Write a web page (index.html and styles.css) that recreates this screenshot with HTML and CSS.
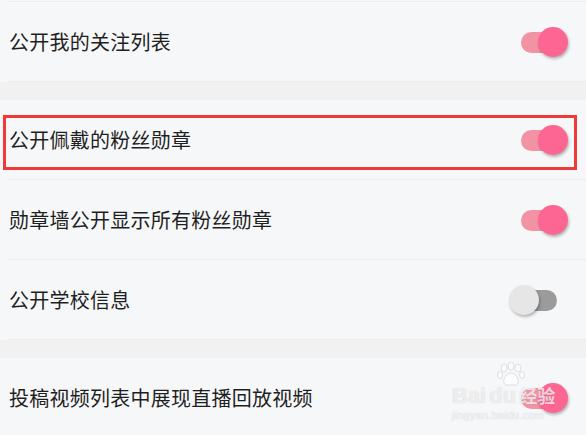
FILE: index.html
```html
<!DOCTYPE html>
<html lang="zh">
<head>
<meta charset="utf-8">
<link rel="stylesheet" href="styles.css">
</head>
<body>
<div class="page">
  <div class="topline"></div>
  <div class="group">
    <div class="row">
      <span class="label">公开我的关注列表</span>
      <span class="toggle on"><span class="track"></span><span class="thumb"></span></span>
    </div>
  </div>
  <div class="gap"></div>
  <div class="group">
    <div class="row">
      <span class="label">公开佩戴的粉丝勋章</span>
      <span class="toggle on"><span class="track"></span><span class="thumb"></span></span>
    </div>
    <div class="row">
      <span class="label">勋章墙公开显示所有粉丝勋章</span>
      <span class="toggle on"><span class="track"></span><span class="thumb"></span></span>
    </div>
    <div class="row">
      <span class="label">公开学校信息</span>
      <span class="toggle off"><span class="track"></span><span class="thumb"></span></span>
    </div>
  </div>
  <div class="gap"></div>
  <div class="group">
    <div class="row">
      <span class="label">投稿视频列表中展现直播回放视频</span>
      <span class="toggle on"><span class="track"></span><span class="thumb"></span></span>
    </div>
  </div>
  <div class="highlight"></div>
  <div class="watermark">
    <svg class="wm-paw" width="30" height="26" viewBox="0 0 30 26">
      <ellipse cx="8" cy="6" rx="3" ry="4" />
      <ellipse cx="15" cy="4" rx="3" ry="4" />
      <ellipse cx="22" cy="6" rx="3" ry="4" />
      <ellipse cx="4" cy="13" rx="2.5" ry="3.5" />
      <ellipse cx="26" cy="13" rx="2.5" ry="3.5" />
      <path d="M15 11 C10 11 7 17 8 21 C9 24 13 23 15 23 C17 23 21 24 22 21 C23 17 20 11 15 11 Z" />
    </svg>
    <div class="wm-main">Bai<span class="wm-du">du</span><span class="wm-cn">经验</span></div>
    <div class="wm-url">jingyan.baidu.com</div>
  </div>
</div>
</body>
</html>
```
FILE: styles.css
```css
html, body {
  margin: 0;
  padding: 0;
  background: #f6f7f9;
}
.page {
  position: relative;
  width: 586px;
  height: 435px;
  overflow: hidden;
  background: #f6f7f9;
  font-family: "Noto Sans CJK SC", "Noto Sans", sans-serif;
}
.topline {
  margin-top: 1px;
  margin-left: 8px;
  height: 1px;
  background: #ebecee;
}
.gap {
  height: 18px;
  background: #f1f1f2;
}
.row {
  margin-left: 8px;
  padding-left: 1px;
  padding-right: 18px;
  height: 79px;
  border-bottom: 1px solid #ebecee;
  display: flex;
  align-items: center;
  justify-content: space-between;
}
.label {
  font-size: 20px;
  color: #1f1f1f;
  line-height: 1;
  letter-spacing: 0.25px;
}
.toggle {
  position: relative;
  width: 59px;
  height: 30px;
  flex: none;
}
.track {
  position: absolute;
  left: 12px;
  top: 5px;
  width: 36px;
  height: 21px;
  border-radius: 11px;
}
.thumb {
  position: absolute;
  top: 0;
  width: 30px;
  height: 30px;
  border-radius: 50%;
  box-shadow: 1px 2px 3px rgba(0, 0, 0, 0.28);
}
.toggle.on .track { background: #f193a3; }
.toggle.on .thumb { right: 0; background: #fd6592; }
.toggle.off .track { background: #9b9b9b; }
.toggle.off .thumb { left: 0; background: #e6e6e6; }
.highlight {
  position: absolute;
  left: 3px;
  top: 115px;
  width: 568px;
  height: 49px;
  border: 3px solid #f03a3a;
}
.watermark {
  position: absolute;
  left: 452px;
  top: 368px;
  color: rgba(255, 255, 255, 0.7);
  text-shadow: 0 0 1px rgba(140, 140, 140, 0.45);
  font-family: "Liberation Sans", Arial, sans-serif;
}
.wm-paw {
  position: absolute;
  left: 44px;
  top: -6px;
  fill: rgba(255, 255, 255, 0.6);
  stroke: rgba(150, 150, 150, 0.35);
  stroke-width: 0.8;
}
.wm-main {
  margin-top: 14px;
  font-size: 22px;
  font-weight: bold;
  line-height: 26px;
  white-space: nowrap;
}
.wm-du { margin-left: 3px; }
.wm-cn {
  margin-left: 3px;
  font-family: "Noto Sans CJK SC", sans-serif;
  font-size: 18px;
}
.wm-url {
  font-size: 11px;
  line-height: 12px;
  letter-spacing: 0.2px;
}
```
